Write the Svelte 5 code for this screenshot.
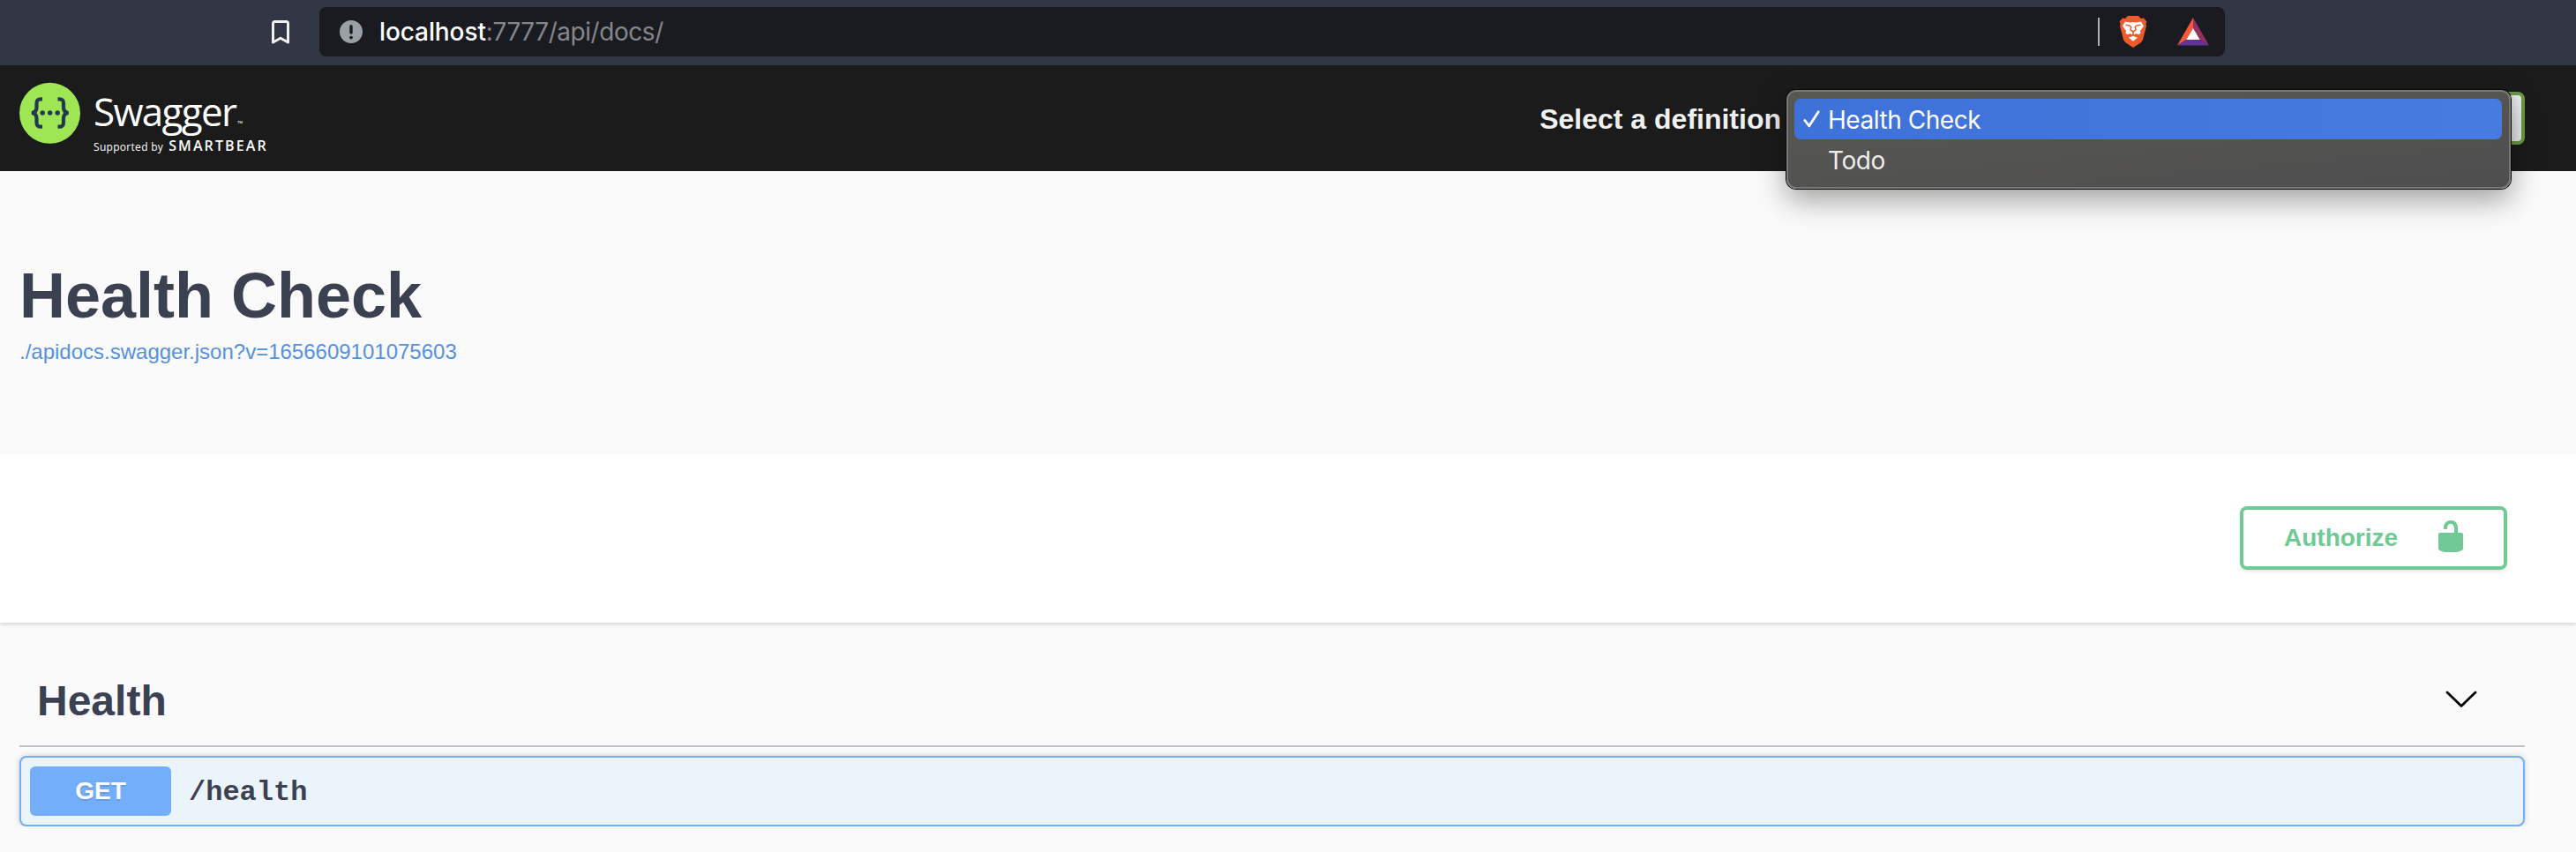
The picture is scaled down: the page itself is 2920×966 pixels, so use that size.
<script>
  const definitions = ['Health Check', 'Todo'];
  let selected = $state('Health Check');
  const operations = [{ method: 'GET', path: '/health' }];
</script>

<div class="browser">
  <svg class="bookmark" width="20" height="27" viewBox="0 0 20 27">
    <path d="M1.5 25V3.5a2 2 0 0 1 2-2h13a2 2 0 0 1 2 2V25L10 20.2z" fill="none" stroke="#f0f0f0" stroke-width="3" stroke-linejoin="round" />
  </svg>
  <div class="address">
    <svg class="info-icon" width="26" height="26" viewBox="0 0 26 26">
      <circle cx="13" cy="13" r="13" fill="#9aa0a6" />
      <path d="M13 6.7v7.4" stroke="#1a1b20" stroke-width="3.4" stroke-linecap="round" />
      <circle cx="13" cy="19.6" r="1.9" fill="#1a1b20" />
    </svg>
    <div class="url"><span class="host">localhost</span><span class="rest">:7777/api/docs/</span></div>
    <div class="divider"></div>
    <svg class="brave" width="32" height="36" viewBox="0 0 32 36">
      <path d="M10 0h12l3 3 3-.4 3.400 4-1 3 .6 2-4 15.400-2 3-9 6-9-6-2-3L1 11.600l.6-2-1-3L4 2.600 7 3z" fill="#ee5a29" />
      <path d="M7 6.500l5.500 1L16 6.900l3.500.6 5.500-1 3 5-4 5.500.6 2.600-2.100 1.700-3.500-1.300-2.300 2L16 22l-.7 0-2.300-2L9.500 21.300 7.400 19.600 8 17l-4-5.500z" fill="#fff" />
      <path d="M16 22.500l5 2.300-5 4-5-4z" fill="#fff" />
      <path d="M7.500 10.300l4.700.8 1.600 1.600-.9 3.300 3.100 2 3.100-2-.9-3.300 1.600-1.600 4.700-.8M16 18v3.200l-3.500 2.200M16 21.200l3.500 2.200" fill="none" stroke="#ee5a29" stroke-width="1.500" />
    </svg>
    <svg class="bat" width="36" height="32" viewBox="0 0 36 32">
      <path d="M18 0v12.500L10.500 25 0 31.500z" fill="#f4573a" />
      <path d="M18 0v12.500L25.500 25 36 31.500z" fill="#932f63" />
      <path d="M0 31.500L10.500 25h15L36 31.500z" fill="#613393" />
      <path d="M18 12l7.700 13H10.300z" fill="#fff" />
    </svg>
  </div>
</div>

<header class="topbar">
  <div class="logo">
    <svg width="70" height="70" viewBox="0 0 70 70">
      <circle cx="34.500" cy="35.300" r="34.500" fill="#9ee654" />
      <g fill="none" stroke="#23394e" stroke-width="4.200">
        <path d="M26 19.300h-1.500c-4 0-5 1.700-5 5v4.500c0 3.700-1.500 5.700-5.500 6.200 4 .5 5.500 2.500 5.500 6.200v4.500c0 3.300 1 5 5 5H26" />
        <path d="M43.500 19.300H45c4 0 5 1.700 5 5v4.500c0 3.700 1.500 5.700 5.500 6.200-4 .5-5.500 2.500-5.500 6.200v4.500c0 3.300-1 5-5 5h-1.500" />
      </g>
      <g fill="#23394e">
        <circle cx="26.200" cy="35" r="2.700" /><circle cx="34.700" cy="35" r="2.700" /><circle cx="43.200" cy="35" r="2.700" />
      </g>
    </svg>
    <div class="wordmark">
      <div class="name">Swagger<span class="tm">™</span></div>
      <div class="support"><span class="by">Supported by</span><span class="brand">SMARTBEAR</span></div>
    </div>
  </div>
  <div class="chooser">
    <span class="label">Select a definition</span>
    <div class="select">
      <div class="menu">
        {#each definitions as name}
          <div class="option" class:active={name === selected}>
            <span class="tick">
              {#if name === selected}
                <svg width="19" height="20" viewBox="0 0 19 20"><path d="M1.800 11.500l5 6.300L17.200 1.800" fill="none" stroke="#fff" stroke-width="2.800" stroke-linecap="round" stroke-linejoin="round" /></svg>
              {/if}
            </span>
            <span class="text">{name}</span>
          </div>
        {/each}
      </div>
    </div>
  </div>
</header>

<section class="info">
  <h1>Health Check</h1>
  <a href="./apidocs.swagger.json?v=1656609101075603">./apidocs.swagger.json?v=1656609101075603</a>
</section>

<section class="schemes">
  <button class="authorize">
    <span>Authorize</span>
    <svg width="28" height="36" viewBox="0 0 28 36">
      <path d="M2 14H18V9.500C18 6 16.500 4 14 4 11.500 4 10 6 10 8V10H6V8C6 3.500 9.500 0 14 0c4.800 0 8 3.500 8 8v6h4a2 2 0 0 1 2 2v16c0 2-5 4-9 4H9c-4 0-9-2-9-4V16a2 2 0 0 1 2-2z" fill="#71c996" />
    </svg>
  </button>
</section>

<main>
  <div class="tag">
    <h3>Health</h3>
    <svg width="36" height="20" viewBox="0 0 36 20"><path d="M2 2L18 17.500 34 2" fill="none" stroke="#000" stroke-width="2.800" stroke-linecap="round" stroke-linejoin="round" /></svg>
  </div>
  {#each operations as op}
    <div class="operation">
      <span class="method">{op.method}</span>
      <span class="path">{op.path}</span>
    </div>
  {/each}
</main>

<style>
  :global(body) { margin: 0; background: #fafafa; font-family: "Liberation Sans", Arial, sans-serif; color: #3b4151; overflow: hidden; }
  .browser { height: 74px; background: #323544; display: flex; align-items: center; box-sizing: border-box; padding: 0 398px 2px 308px; }
  .bookmark { flex: none; margin-right: 34px; }
  .address { flex: 1; height: 56px; border-radius: 8px; background: #1a1b20; display: flex; align-items: center; padding: 0 18px 0 23px; }
  .url { margin-left: 19px; flex: 1; font: 28px/56px Inter, sans-serif; letter-spacing: -0.45px; color: #85868a; white-space: nowrap; }
  .host { color: #fff; font-weight: 500; letter-spacing: -0.1px; }
  .divider { width: 2px; height: 32px; background: #b0b0b2; margin-right: 22px; }
  .brave { margin-right: 34px; }

  .topbar { height: 120px; background: #1b1b1b; box-sizing: border-box; display: flex; justify-content: space-between; padding: 19px 58px 0 22px; }
  .logo { display: flex; color: #fff; font-family: "Open Sans", sans-serif; }
  .wordmark { margin-left: 14px; padding-top: 3px; white-space: nowrap; }
  .name { font-size: 44px; line-height: 60px; height: 60px; letter-spacing: -1.7px; }
  .tm { font-size: 8px; letter-spacing: 0; margin-left: 2px; }
  .support { display: flex; align-items: baseline; gap: 6px; line-height: 18px; }
  .by { font-size: 12px; letter-spacing: 0.3px; }
  .brand { font-size: 16px; font-weight: 600; letter-spacing: 2.1px; }
  .chooser { display: flex; align-items: flex-start; padding-top: 11px; }
  .label { color: #f0f0f0; font-weight: 700; font-size: 32px; line-height: 60px; margin-right: 13px; padding-top: 1px; white-space: nowrap; }
  .select { position: relative; width: 830px; height: 60px; box-sizing: border-box; border: 4px solid #6b9a46; border-radius: 8px; background: linear-gradient(to right, #ddd 98%, #eee); }
  .menu { position: absolute; left: -11px; top: -6px; width: 821px; height: 112px; box-sizing: border-box; border: 2px solid #787877; border-radius: 11px; background: linear-gradient(175deg, #585853, #4f4e4f); box-shadow: 0 0 0 1px #080808, 0 12px 34px rgba(0, 0, 0, 0.38); padding: 8px 8px 8px 7px; }
  .option { height: 46px; display: flex; align-items: center; border-radius: 7px; font: 28px/46px Inter, sans-serif; letter-spacing: -0.45px; color: #eee; white-space: nowrap; }
  .active { background: linear-gradient(to right, #3f72d8, #477bdf); color: #fff; }
  .tick { width: 38px; display: flex; justify-content: center; box-sizing: border-box; }
  .text { padding-top: 2px; }

  .info { height: 320px; box-sizing: border-box; padding: 101px 22px 0; }
  h1 { margin: 0; font-size: 72px; line-height: 80px; }
  .info a { display: block; color: #5691e0; font-size: 24px; line-height: 28px; margin-top: 10px; text-decoration: none; }

  .schemes { height: 192px; box-sizing: border-box; background: #fff; box-shadow: 0 2px 4px rgba(0, 0, 0, 0.15); padding: 60px 78px 0; display: flex; justify-content: flex-end; }
  .authorize { width: 303px; height: 72px; box-sizing: border-box; border: 4px solid #71c996; border-radius: 8px; background: transparent; box-shadow: 0 2px 4px rgba(0, 0, 0, 0.1); color: #71c996; font: 700 28px "Liberation Sans", sans-serif; display: flex; justify-content: space-between; align-items: center; padding: 0 46px; }
  .authorize svg { margin-bottom: 4px; }

  main { padding: 0 58px 0 22px; }
  .tag { height: 141px; box-sizing: border-box; border-bottom: 2px solid #c0c1c6; display: flex; justify-content: space-between; align-items: center; padding: 39px 54px 0 20px; }
  h3 { margin: 0; font-size: 48px; line-height: 56px; }
  .tag svg { margin-bottom: 4px; }
  .operation { height: 80px; margin-top: 10px; box-sizing: border-box; border: 2px solid #72aefa; border-radius: 8px; background: #ebf3fb; box-shadow: 0 0 6px rgba(0, 0, 0, 0.19); display: flex; align-items: center; padding: 0 10px; }
  .method { width: 160px; height: 56px; border-radius: 6px; background: #72aef9; color: #fff; font: 700 28px/56px "Liberation Sans", sans-serif; text-align: center; text-shadow: 0 2px 0 rgba(0, 0, 0, 0.1); }
  .path { font: 700 32px/56px "Liberation Mono", monospace; margin-left: 20px; padding-top: 4px; }
</style>
